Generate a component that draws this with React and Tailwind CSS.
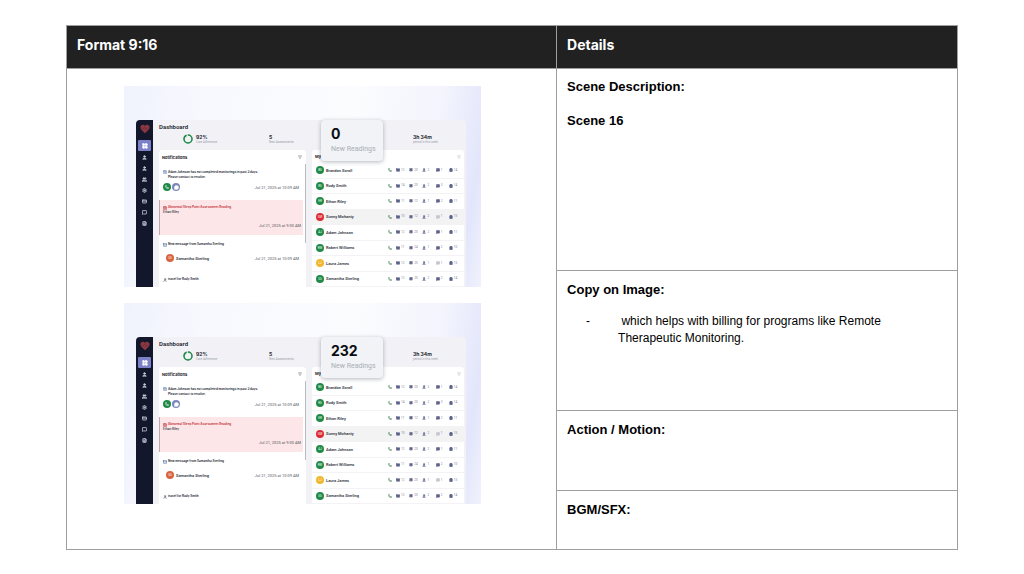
import React from 'react';
import { LayoutGrid, User, Users, Settings, CreditCard, MessageSquare, FileText, Phone, MessageCircle, ListFilter, CalendarDays, Mail, BellRing, Clipboard } from 'lucide-react';

const NAV_ICONS = [User, User, Users, Settings, CreditCard, MessageSquare, FileText];

const PATIENTS = [
  { name: 'Brandon Scroll', initials: 'BS', color: 'bg-[#1f8a47]', counts: [12, 20, 2, 1, 14] },
  { name: 'Rudy Smith', initials: 'RS', color: 'bg-[#1f8a47]', counts: [14, 20, 2, 3, 14] },
  { name: 'Ethan Riley', initials: 'ER', color: 'bg-[#1f8a47]', counts: [11, 12, 1, 2, 11] },
  { name: 'Sunny Mohanty', initials: 'SM', color: 'bg-[#dc2a35]', counts: [10, 12, 2, 1, 15], active: true, muted: true },
  { name: 'Adam Johnson', initials: 'AJ', color: 'bg-[#1f8a47]', counts: [12, 20, 2, 1, 11] },
  { name: 'Robert Williams', initials: 'RW', color: 'bg-[#1f8a47]', counts: [11, 24, 1, 2, 10] },
  { name: 'Laura James', initials: 'LJ', color: 'bg-[#f0b72f]', counts: [12, 20, 1, 1, 15], muted: true },
  { name: 'Samantha Sterling', initials: 'SS', color: 'bg-[#1f8a47]', counts: [12, 20, 2, 2, 14] },
];

const COUNT_ICONS = [Mail, BellRing, User, MessageSquare, Clipboard];

const Sidebar = () => (
  <nav className="w-[17px] shrink-0 bg-[#12172b] rounded-tl-[4px] flex flex-col items-center pt-[4px]">
    <svg viewBox="0 0 24 24" className="w-[10px] h-[10px]">
      <path d="M12 22C5 16 1 12 1 7.500C1 4.200 3.800 2 7 2C9 2 11 3.200 12 5C13 3.200 15 2 17 2C20.200 2 23 4.200 23 7.500C23 12 19 16 12 22Z" fill="#8a3742" />
      <path d="M5 11h4l2-3 3 5 2-2h3" fill="none" stroke="#6a2a38" strokeWidth="1.500" />
    </svg>
    <div className="w-[13px] h-[11px] mt-[6px] rounded-[1px] bg-[#7b80c9] flex items-center justify-center">
      <LayoutGrid size={6} strokeWidth={3} fill="white" className="text-white" />
    </div>
    <div className="flex flex-col gap-[6px] mt-[4px]">
      {NAV_ICONS.map((Icon, i) => (
        <Icon key={i} size={5} strokeWidth={4} fill={i < 3 ? 'currentColor' : 'none'} className="text-[#c5c9d6]" />
      ))}
    </div>
  </nav>
);

const Stat = ({ value, label }) => (
  <div>
    <p className="text-[5px] leading-[6px] font-bold text-[#22252c] font-[Inter,sans-serif]">{value}</p>
    <p className="text-[3px] leading-[5px] text-[#a0a3ab]">{label}</p>
  </div>
);

const Stamp = ({ children }) => (
  <time className="text-[4px] leading-[5px] text-[#55585f]">{children}</time>
);

const Notifications = () => (
  <section className="w-[147px] bg-white rounded-t-[3px] overflow-hidden">
    <div className="h-[14px] px-[3px] pr-[4px] flex items-center justify-between">
      <h3 className="text-[4px] leading-[5px] font-bold text-[#1d2026] font-[Inter,sans-serif]">Notifications</h3>
      <ListFilter size={4} strokeWidth={3} className="text-[#6b7078]" />
    </div>
    <div className="flex items-start">
      <div className="flex-1">
        <div className="h-[36px] pl-[4px] pr-[4px] pt-[6px]">
          <div className="flex gap-[1px] text-[3px] leading-[5px] font-bold text-[#33373f] font-[Inter,sans-serif]">
            <CalendarDays size={4} className="text-[#3f63a8] shrink-0" />
            <p>Adam Johnson has not completed monitorings in past 3 days.<br />Please contact to resolve.</p>
          </div>
          <div className="flex items-center mt-[3px]">
            <span className="w-[8px] h-[8px] rounded-full bg-[#1f8a47] flex items-center justify-center">
              <Phone size={4} strokeWidth={3} className="text-white" />
            </span>
            <span className="w-[8px] h-[8px] ml-[1px] mr-auto rounded-full bg-[#7b86bd] flex items-center justify-center">
              <MessageCircle size={5} fill="white" className="text-white" />
            </span>
            <Stamp>Jul 21, 2025 at 10:09 AM</Stamp>
          </div>
        </div>
        <div className="h-[35px] bg-[#fde6e7] border-l border-[#c3a5aa] pl-[3px] pr-[2px] pt-[5px] flex flex-col">
          <div className="flex items-center gap-[1px] text-[#c8424b]">
            <CalendarDays size={4} strokeWidth={3} />
            <p className="text-[3px] leading-[5px] font-bold font-[Inter,sans-serif]">Abnormal Sleep Point Assessment Reading</p>
          </div>
          <p className="text-[3px] leading-[5px] font-semibold text-[#33373f] font-[Inter,sans-serif]">Ethan Riley</p>
          <div className="mt-[8px] text-right flex justify-end"><Stamp>Jul 21, 2025 at 9:00 AM</Stamp></div>
        </div>
        <div className="h-[35px] px-[4px] pt-[7px]">
          <div className="flex items-center gap-[1px]">
            <Mail size={4} strokeWidth={3} className="text-[#2f5f9a]" />
            <p className="text-[3px] leading-[5px] font-bold text-[#33373f] font-[Inter,sans-serif]">New message from Samantha Sterling</p>
          </div>
          <div className="flex items-center mt-[7px] pl-[3px]">
            <span className="w-[8px] h-[8px] rounded-full bg-[#d9633f] text-white text-[3px] leading-[8px] text-center">SS</span>
            <p className="ml-[2px] mr-auto text-[4px] leading-[5px] font-semibold text-[#33373f]">Samantha Sterling</p>
            <Stamp>Jul 21, 2025 at 10:09 AM</Stamp>
          </div>
        </div>
        <div className="flex items-center gap-[1px] px-[4px] pt-[7px]">
          <User size={4} strokeWidth={3} className="text-[#3c4a66]" />
          <p className="text-[3px] leading-[5px] font-bold text-[#33373f] font-[Inter,sans-serif]">travel for Rudy Smith</p>
        </div>
      </div>
      <div className="w-[1px] h-[79px] ml-[2px] bg-[#b9bbc0]" />
    </div>
  </section>
);

const Patients = () => (
  <section className="flex-1 bg-white rounded-t-[3px] overflow-hidden">
    <div className="h-[13px] px-[3px] flex items-center justify-between">
      <h3 className="text-[4px] leading-[5px] font-bold text-[#1d2026] font-[Inter,sans-serif]">My Patients</h3>
      <ListFilter size={4} className="text-[#9a9ea6]" />
    </div>
    <ul className="h-[124px] flex flex-col">
      {PATIENTS.map(p => (
        <li key={p.name} className={`flex-1 flex items-center pl-[4px] pr-[2px] border-b border-[#f3f3f5] ${p.active ? 'bg-[#f3f3f4]' : ''}`}>
          <span className={`w-[8px] h-[8px] rounded-full text-white text-[3px] leading-[8px] text-center ${p.color}`}>{p.initials}</span>
          <span className="ml-[2px] mr-auto text-[4px] leading-[5px] font-semibold text-[#33373f]">{p.name}</span>
          <Phone size={4} strokeWidth={3} className="text-[#3d7a55]" />
          <div className="w-[66px] ml-[4px] grid grid-cols-5">
            {COUNT_ICONS.map((Icon, i) => (
              <span key={i} className="flex items-center gap-[1px] text-[3px] leading-[5px] text-[#7c8098]">
                <Icon size={4} strokeWidth={3} fill="currentColor" className={p.muted && i === 3 ? 'text-[#c3c5cf]' : 'text-[#5d628a]'} />
                {p.counts[i]}
              </span>
            ))}
          </div>
        </li>
      ))}
    </ul>
  </section>
);

const DashboardFrame = ({ readings }) => (
  <figure className="relative h-[201px] pt-[34px] pl-[12px] pr-[15px] overflow-hidden font-[Roboto,sans-serif] bg-[linear-gradient(100deg,#f0f2fd_0%,#f8f9fe_22%,#fbfcfe_60%,#f3f4fd_82%,#e3e6fb_94%,#f0f2fd_100%)]">
    <div className="h-full flex">
      <Sidebar />
      <div className="flex-1 bg-[#f1f1f6] rounded-tr-[4px] pl-[6px] pr-[2px] flex flex-col">
        <h2 className="pt-[3px] text-[6px] leading-[8px] font-semibold text-[#22252c]">Dashboard</h2>
        <div className="h-[22px] pt-[3px] pl-[24px] flex">
          <svg viewBox="0 0 20 20" className="w-[10px] h-[10px] mr-[3px]">
            <circle cx="10" cy="10" r="8" fill="none" stroke="#c3dccb" strokeWidth="3" />
            <circle cx="10" cy="10" r="8" fill="none" stroke="#1f8a47" strokeWidth="3" strokeDasharray="46 5" transform="rotate(-90 10 10)" />
          </svg>
          <div className="w-[73px]"><Stat value="92%" label="Care Adherence" /></div>
          <div className="w-[144px]"><Stat value="5" label="New Assessments" /></div>
          <Stat value="3h 34m" label="period in this week" />
        </div>
        <div className="flex-1 flex gap-[6px]">
          <Notifications />
          <Patients />
        </div>
      </div>
    </div>
    {/* highlighted stat floats above the dashboard */}
    <div className="absolute left-[197px] top-[34px] w-[62px] h-[41px] rounded-[4px] bg-[#f1f3f6] shadow-[0_1px_4px_rgba(40,45,70,0.35)] pl-[10px] pt-[6px]">
      <p className="text-[14px] leading-[16px] font-bold text-[#0b0d12] font-[Inter,sans-serif]">{readings}</p>
      <p className="text-[7px] leading-[14px] text-[#a9adb4] whitespace-nowrap">New Readings</p>
    </div>
  </figure>
);

const App = () => {
  return (
    <main className="bg-white px-[66px] pt-[25px] pb-[24px] font-['Liberation_Sans',Arial,sans-serif] text-black">
      <table className="w-full table-fixed border-collapse text-left text-[13px] leading-[17px]">
        <colgroup>
          <col className="w-[55%]" />
          <col />
        </colgroup>
        <thead>
          <tr className="h-[43px] bg-[#212121] text-white font-[Inter,sans-serif] text-[14px]">
            <th className="border border-[#9e9e9e] px-[10px] pb-[6px] font-bold">Format 9:16</th>
            <th className="border border-[#9e9e9e] px-[10px] pb-[6px] font-bold">Details</th>
          </tr>
        </thead>
        <tbody className="align-top">
          <tr className="h-[202px]">
            <td rowSpan={4} className="border border-[#9e9e9e] pl-[57px] pr-[75px] pt-[17px]">
              <div className="flex flex-col gap-[16px]">
                <DashboardFrame readings="0" />
                <DashboardFrame readings="232" />
              </div>
            </td>
            <td className="border border-[#9e9e9e] px-[10px] pt-[9px] font-bold">
              <p>Scene Description:</p>
              <p className="mt-[17px]">Scene 16</p>
            </td>
          </tr>
          <tr className="h-[140px]">
            <td className="border border-[#9e9e9e] px-[10px] pt-[10px]">
              <p className="font-bold">Copy on Image:</p>
              <ul className="mt-[15px] pl-[19px] pr-[40px] text-[12px] leading-[17px]">
                <li className="flex">
                  <span className="w-[32px] shrink-0">-</span>
                  <span className="whitespace-pre-wrap"> which helps with billing for programs like Remote Therapeutic Monitoring.</span>
                </li>
              </ul>
            </td>
          </tr>
          <tr className="h-[80px]">
            <td className="border border-[#9e9e9e] px-[10px] pt-[10px] font-bold">Action / Motion:</td>
          </tr>
          <tr className="h-[59px]">
            <td className="border border-[#9e9e9e] px-[10px] pt-[10px] font-bold">BGM/SFX:</td>
          </tr>
        </tbody>
      </table>
    </main>
  );
};

export default App;
